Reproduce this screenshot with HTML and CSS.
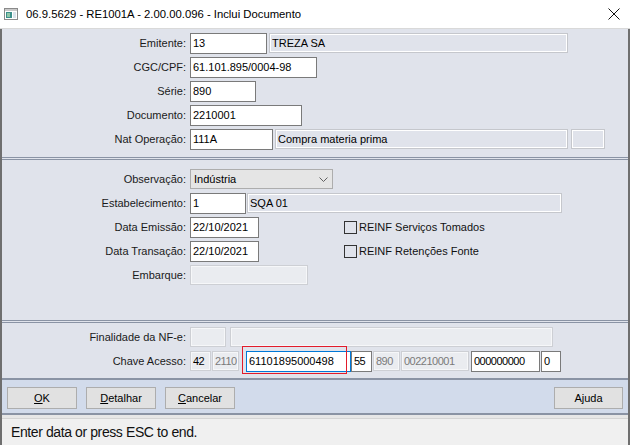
FILE: index.html
```html
<!DOCTYPE html>
<html lang="pt-BR">

<head>
    <meta charset="UTF-8">
    <title>RE1001A - Inclui Documento</title>
    <link rel="stylesheet" href="styles.css">
</head>

<body>
    <div class="window">
        <div class="titlebar">
            <svg class="app-icon" width="14" height="12" viewBox="0 0 14 12">
                <rect x="0.5" y="0.5" width="13" height="11" fill="#fff" stroke="#8a8a8a" />
                <rect x="1" y="1" width="12" height="2" fill="#c9c9c9" />
                <rect x="2" y="4" width="6" height="6" fill="#3b8f8a" />
                <rect x="3" y="5" width="3" height="4" fill="#8fc7a8" />
                <rect x="9" y="4" width="3" height="6" fill="#d9e3ea" />
            </svg>
            <span class="title">06.9.5629 - RE1001A - 2.00.00.096 - Inclui Documento</span>
            <svg class="close" width="12" height="12" viewBox="0 0 12 12">
                <path d="M0.5 0.5 L11.5 11.5 M11.5 0.5 L0.5 11.5" stroke="#111" stroke-width="1" fill="none" />
            </svg>
        </div>

        <div class="body">
            <div class="frame">
                <section class="panel panel-top">
                    <div class="row">
                        <label class="label">Emitente:</label>
                        <input class="input w77" value="13">
                        <input class="input ro w299 ml2" value="TREZA SA" readonly>
                    </div>
                    <div class="row">
                        <label class="label">CGC/CPF:</label>
                        <input class="input w127" value="61.101.895/0004-98">
                    </div>
                    <div class="row">
                        <label class="label">Série:</label>
                        <input class="input w66" value="890">
                    </div>
                    <div class="row">
                        <label class="label">Documento:</label>
                        <input class="input w112" value="2210001">
                    </div>
                    <div class="row">
                        <label class="label">Nat Operação:</label>
                        <input class="input w83" value="111A">
                        <input class="input ro w293 ml2" value="Compra materia prima" readonly>
                        <input class="input ro w34 ml3" value="" readonly>
                    </div>
                </section>

                <section class="panel panel-mid">
                    <div class="row">
                        <label class="label">Observação:</label>
                        <div class="select">
                            <span>Indústria</span>
                            <svg width="9" height="5" viewBox="0 0 9 5">
                                <path d="M0.5 0.5 L4.5 4.5 L8.5 0.5" stroke="#606060" fill="none" />
                            </svg>
                        </div>
                    </div>
                    <div class="row">
                        <label class="label">Estabelecimento:</label>
                        <input class="input w56" value="1">
                        <input class="input ro w315 ml1" value="SQA 01" readonly>
                    </div>
                    <div class="row">
                        <label class="label">Data Emissão:</label>
                        <input class="input w69" value="22/10/2021">
                        <span class="check"><span class="box"></span>REINF Serviços Tomados</span>
                    </div>
                    <div class="row">
                        <label class="label">Data Transação:</label>
                        <input class="input w69" value="22/10/2021">
                        <span class="check"><span class="box"></span>REINF Retenções Fonte</span>
                    </div>
                    <div class="row">
                        <label class="label">Embarque:</label>
                        <input class="input dis w118 h20" value="" disabled>
                    </div>
                </section>

                <section class="panel panel-key">
                    <div class="row">
                        <label class="label">Finalidade da NF-e:</label>
                        <input class="input dis w36 h20" value="" disabled>
                        <input class="input dis w323 h20 ml4" value="" disabled>
                    </div>
                    <div class="row">
                        <label class="label">Chave Acesso:</label>
                        <input class="input dis dark tight w21" value="42" disabled>
                        <input class="input dis tight w27 ml1" value="2110" disabled>
                        <span class="focus-wrap">
                            <input class="input focused w105" value="61101895000498">
                        </span>
                        <input class="input tight w21" value="55">
                        <input class="input dis tight w27 ml1" value="890" disabled>
                        <input class="input dis tight w68 ml1" value="002210001" disabled>
                        <input class="input tight w69 ml2" value="000000000">
                        <input class="input tight w20 ml1" value="0">
                    </div>
                </section>

                <div class="button-bar">
                    <button class="btn"><u>O</u>K</button>
                    <button class="btn"><u>D</u>etalhar</button>
                    <button class="btn"><u>C</u>ancelar</button>
                    <button class="btn btn-help">Ajuda</button>
                </div>
            </div>

            <div class="status">Enter data or press ESC to end.</div>
        </div>
    </div>
</body>

</html>
```

FILE: styles.css
```css
*,
*::before,
*::after {
    box-sizing: border-box;
}

body {
    margin: 0;
    background: #fff;
    color: #000;
    font-family: 'Liberation Sans', Arial, sans-serif;
    font-size: 11px;
}

.window {
    width: 630px;
    height: 445px;
    display: flex;
    flex-direction: column;
    overflow: hidden;
}

.titlebar {
    height: 29px;
    flex: none;
    display: flex;
    align-items: center;
    padding-left: 4px;
    background: #fff;
    border-bottom: 1px solid #d9d9d9;
}

.title {
    margin-left: 8px;
    font-size: 11.3px;
    color: #000;
}

.close {
    margin-left: auto;
    margin-right: 10px;
}

.body {
    flex: 1;
    display: flex;
    flex-direction: column;
    border-left: 2px solid #6f6f6f;
    border-right: 2px solid #6f6f6f;
}

.frame {
    background: #e0e3eb;
}

.panel {
    border-bottom: 3px double #8a93a4;
}

.panel-top {
    padding: 2px 0 6px;
}

.panel-mid {
    padding: 7px 0 33px;
}

.panel-key {
    padding: 2px 0 5px;
    border-bottom: 2px solid #8a93a4;
}

.row {
    display: flex;
    align-items: center;
    height: 24px;
}

.label {
    flex: none;
    width: 188px;
    padding-right: 4px;
    text-align: right;
    color: #1a1a1a;
}

.input {
    flex: none;
    height: 21px;
    margin: 0;
    padding: 0 2px;
    border: 1px solid #7a7a7a;
    border-radius: 0;
    background: #fff;
    color: #000;
    font: inherit;
    outline: none;
}

.tight {
    padding: 0 1px 0 2px;
    letter-spacing: -0.5px;
}

.ro {
    height: 20px;
    background: #e0e3eb;
    border-color: #c5c7cc;
    box-shadow: inset 0 0 0 1px #fff;
}

.dis {
    height: 20px;
    background: #eaecf0;
    border-color: #cdcfd4;
    box-shadow: inset 0 0 0 1px #f6f7f9;
    color: #7a7a7a;
}

.dis.dark {
    color: #000;
}

.focused {
    border-color: #0078d7;
}

.focus-wrap {
    position: relative;
    display: flex;
    margin-left: 7px;
}

.focus-wrap::after {
    content: '';
    position: absolute;
    left: -4px;
    top: -5px;
    width: 105px;
    height: 28px;
    border: 1px solid #e21b2b;
}

.h20 { height: 20px; }
.ml1 { margin-left: 1px; }
.ml2 { margin-left: 2px; }
.ml3 { margin-left: 3px; }
.ml4 { margin-left: 4px; }

.w20 { width: 20px; }
.w21 { width: 21px; }
.w27 { width: 27px; }
.w34 { width: 34px; }
.w36 { width: 36px; }
.w56 { width: 56px; }
.w66 { width: 66px; }
.w68 { width: 68px; }
.w69 { width: 69px; }
.w77 { width: 77px; }
.w83 { width: 83px; }
.w105 { width: 105px; }
.w112 { width: 112px; }
.w118 { width: 118px; }
.w127 { width: 127px; }
.w293 { width: 293px; }
.w299 { width: 299px; }
.w315 { width: 315px; }
.w323 { width: 323px; }

.select {
    width: 143px;
    height: 20px;
    display: flex;
    align-items: center;
    justify-content: space-between;
    padding: 0 4px 0 3px;
    background: #e5e5e5;
    border: 1px solid #adadad;
}

.check {
    display: flex;
    align-items: center;
    margin-left: 85px;
    color: #111;
}

.box {
    width: 13px;
    height: 13px;
    margin-right: 2px;
    border: 1px solid #333;
}

.button-bar {
    display: flex;
    gap: 9px;
    padding: 7px 5px 4px;
    background: #d2dbeb;
    border-bottom: 2px solid #8a93a4;
}

.btn {
    width: 70px;
    height: 22px;
    margin: 0;
    padding: 0;
    background: #e1e1e1;
    border: 1px solid #adadad;
    border-radius: 0;
    color: #000;
    font: inherit;
}

.btn-help {
    margin-left: auto;
    width: 69px;
}

.status {
    flex: 1;
    padding: 4px 0 0 9px;
    line-height: 26px;
    background: linear-gradient(#e7e7e7 0 3px, #d5d5d5 3px 4px, #f0f0f0 4px);
    font-size: 14px;
    letter-spacing: -0.4px;
    color: #111;
}
```
